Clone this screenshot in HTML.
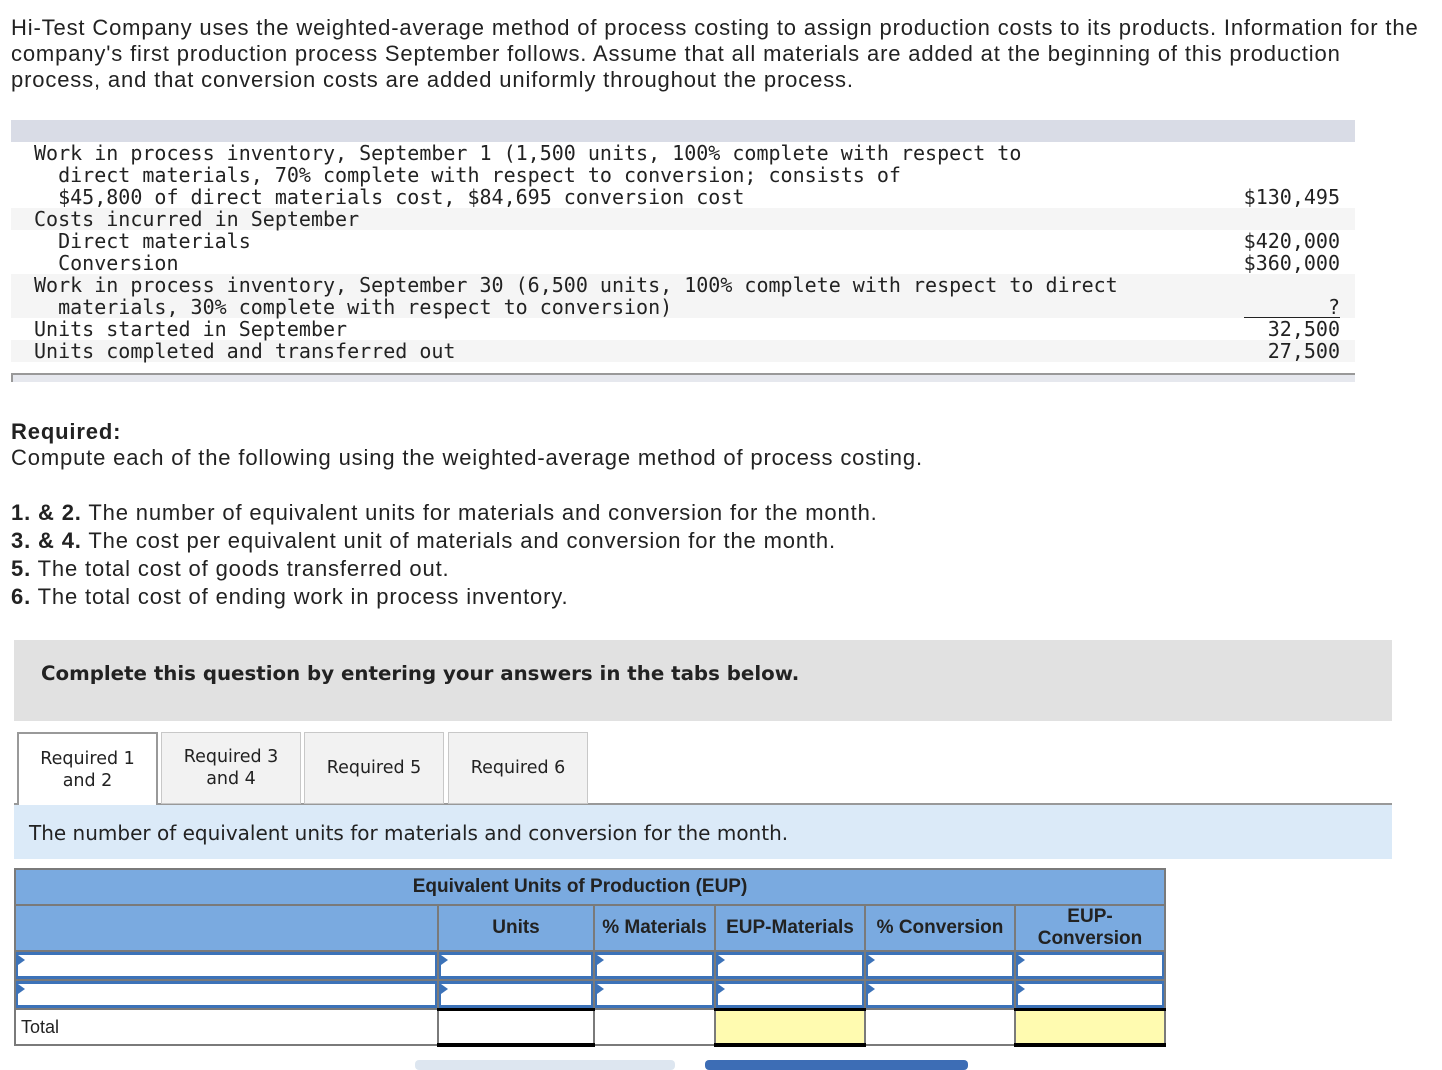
<!DOCTYPE html>
<html><head><meta charset="utf-8"><style>
*{margin:0;padding:0;box-sizing:border-box}
body{width:1442px;height:1064px;background:#fff;position:relative;font-family:"Liberation Sans",Arial,sans-serif;color:#222;overflow:hidden}
.a{position:absolute}
.p{font-size:22px;letter-spacing:0.85px;line-height:26px;left:11px;width:1425px}
.m{font-family:"DejaVu Sans Mono","Liberation Mono",monospace;font-size:20px;line-height:22px;white-space:pre;color:#222}
.r{position:absolute;left:11px;width:1344px;height:22px}
.g{background:#f5f5f5}
.tab{position:absolute;top:732px;height:72px;border:1px solid #c8c8c8;background:#f2f2f2;font-family:"DejaVu Sans",Verdana,sans-serif;font-size:17.5px;line-height:22px;text-align:center;display:flex;align-items:center;justify-content:center;color:#222}
table{position:absolute;left:14px;top:868px;border-collapse:collapse;font-family:"Liberation Sans",Arial,sans-serif}
td{border:2px solid #7a7a7a;padding:0}
.h{background:#7aaae0;font-weight:bold;font-size:19px;text-align:center;color:#222}
.in{border:2px solid #7a7a7a;position:relative}
.in div{position:absolute;inset:0;border:2px solid #3c72b8;border-top-width:3px;border-bottom-width:3px}
.in div:before{content:"";position:absolute;left:0;top:0;border-left:7px solid #3c72b8;border-top:5px solid transparent;border-bottom:5px solid transparent}
</style></head><body>
<div class="a p" style="top:15px">Hi-Test Company uses the weighted-average method of process costing to assign production costs to its products. Information for the company's first production process September follows. Assume that all materials are added at the beginning of this production process, and that conversion costs are added uniformly throughout the process.</div>

<div class="a" style="left:11px;top:120px;width:1344px;height:22px;background:#d9dce6"></div>
<div class="r g" style="top:208px"></div>
<div class="r g" style="top:274px;height:44px"></div>
<div class="r g" style="top:340px"></div>
<div class="a m" style="left:34px;top:142px">Work in process inventory, September 1 (1,500 units, 100% complete with respect to
  direct materials, 70% complete with respect to conversion; consists of
  $45,800 of direct materials cost, $84,695 conversion cost
Costs incurred in September
  Direct materials
  Conversion
Work in process inventory, September 30 (6,500 units, 100% complete with respect to direct
  materials, 30% complete with respect to conversion)
Units started in September
Units completed and transferred out</div>
<div class="a m" style="right:102px;top:186px;text-align:right">$130,495</div>
<div class="a m" style="right:102px;top:230px;text-align:right">$420,000
$360,000</div>
<div class="a m" style="right:102px;top:296px;text-align:right">?</div>
<div class="a" style="left:1244px;top:317px;width:96px;border-top:1px solid #222"></div>
<div class="a m" style="right:102px;top:318px;text-align:right">32,500
27,500</div>
<div class="a" style="left:11px;top:373px;width:1344px;height:9px;background:#e6e8ee;border-top:2px solid #999;border-left:2px solid #999"></div>

<div class="a p" style="top:419px"><b>Required:</b><br>Compute each of the following using the weighted-average method of process costing.</div>
<div class="a p" style="top:499px;line-height:28px"><b>1. &amp; 2.</b> The number of equivalent units for materials and conversion for the month.<br><b>3. &amp; 4.</b> The cost per equivalent unit of materials and conversion for the month.<br><b>5.</b> The total cost of goods transferred out.<br><b>6.</b> The total cost of ending work in process inventory.</div>

<div class="a" style="left:14px;top:640px;width:1378px;height:81px;background:#e1e1e1"></div>
<div class="a" style="left:41px;top:661px;font-family:'DejaVu Sans',Verdana,sans-serif;font-weight:bold;font-size:19.8px;line-height:26px">Complete this question by entering your answers in the tabs below.</div>

<div class="a" style="left:14px;top:803px;width:1378px;height:2px;background:#999"></div>
<div class="tab" style="left:17px;width:141px;background:#fff;border:2px solid #999;border-bottom:none;height:73px">Required 1<br>and 2</div>
<div class="tab" style="left:161px;width:140px">Required 3<br>and 4</div>
<div class="tab" style="left:304px;width:140px">Required 5</div>
<div class="tab" style="left:448px;width:140px">Required 6</div>
<div class="a" style="left:14px;top:805px;width:1378px;height:54px;background:#dbeaf8"></div>
<div class="a" style="left:29px;top:820px;font-family:'DejaVu Sans',Verdana,sans-serif;font-size:20px;line-height:26px">The number of equivalent units for materials and conversion for the month.</div>

<table>
<tr style="height:36px"><td class="h" colspan="6" style="padding-right:20px">Equivalent Units of Production (EUP)</td></tr>
<tr style="height:46px"><td class="h" style="width:423px"></td><td class="h" style="width:156px">Units</td><td class="h" style="width:121px">% Materials</td><td class="h" style="width:150px">EUP-Materials</td><td class="h" style="width:150px">% Conversion</td><td class="h" style="width:150px;line-height:22px">EUP-<br>Conversion</td></tr>
<tr style="height:29px"><td class="in"><div></div></td><td class="in"><div></div></td><td class="in"><div></div></td><td class="in"><div></div></td><td class="in"><div></div></td><td class="in"><div></div></td></tr>
<tr style="height:29px"><td class="in"><div></div></td><td class="in"><div></div></td><td class="in"><div></div></td><td class="in"><div></div></td><td class="in"><div></div></td><td class="in"><div></div></td></tr>
<tr style="height:36px"><td style="font-size:18px;padding-left:5px">Total</td><td style="border-top:3px solid #000;border-bottom:4px solid #000"></td><td></td><td style="background:#fffbb0;border-top:3px solid #000;border-bottom:4px solid #000"></td><td></td><td style="background:#fffbb0;border-top:3px solid #000;border-bottom:4px solid #000"></td></tr>
</table>
<div class="a" style="left:415px;top:1060px;width:260px;height:10px;background:#dde6f0;border-radius:4px"></div>
<div class="a" style="left:705px;top:1060px;width:263px;height:10px;background:#3d6db5;border-radius:4px"></div>
</body></html>
